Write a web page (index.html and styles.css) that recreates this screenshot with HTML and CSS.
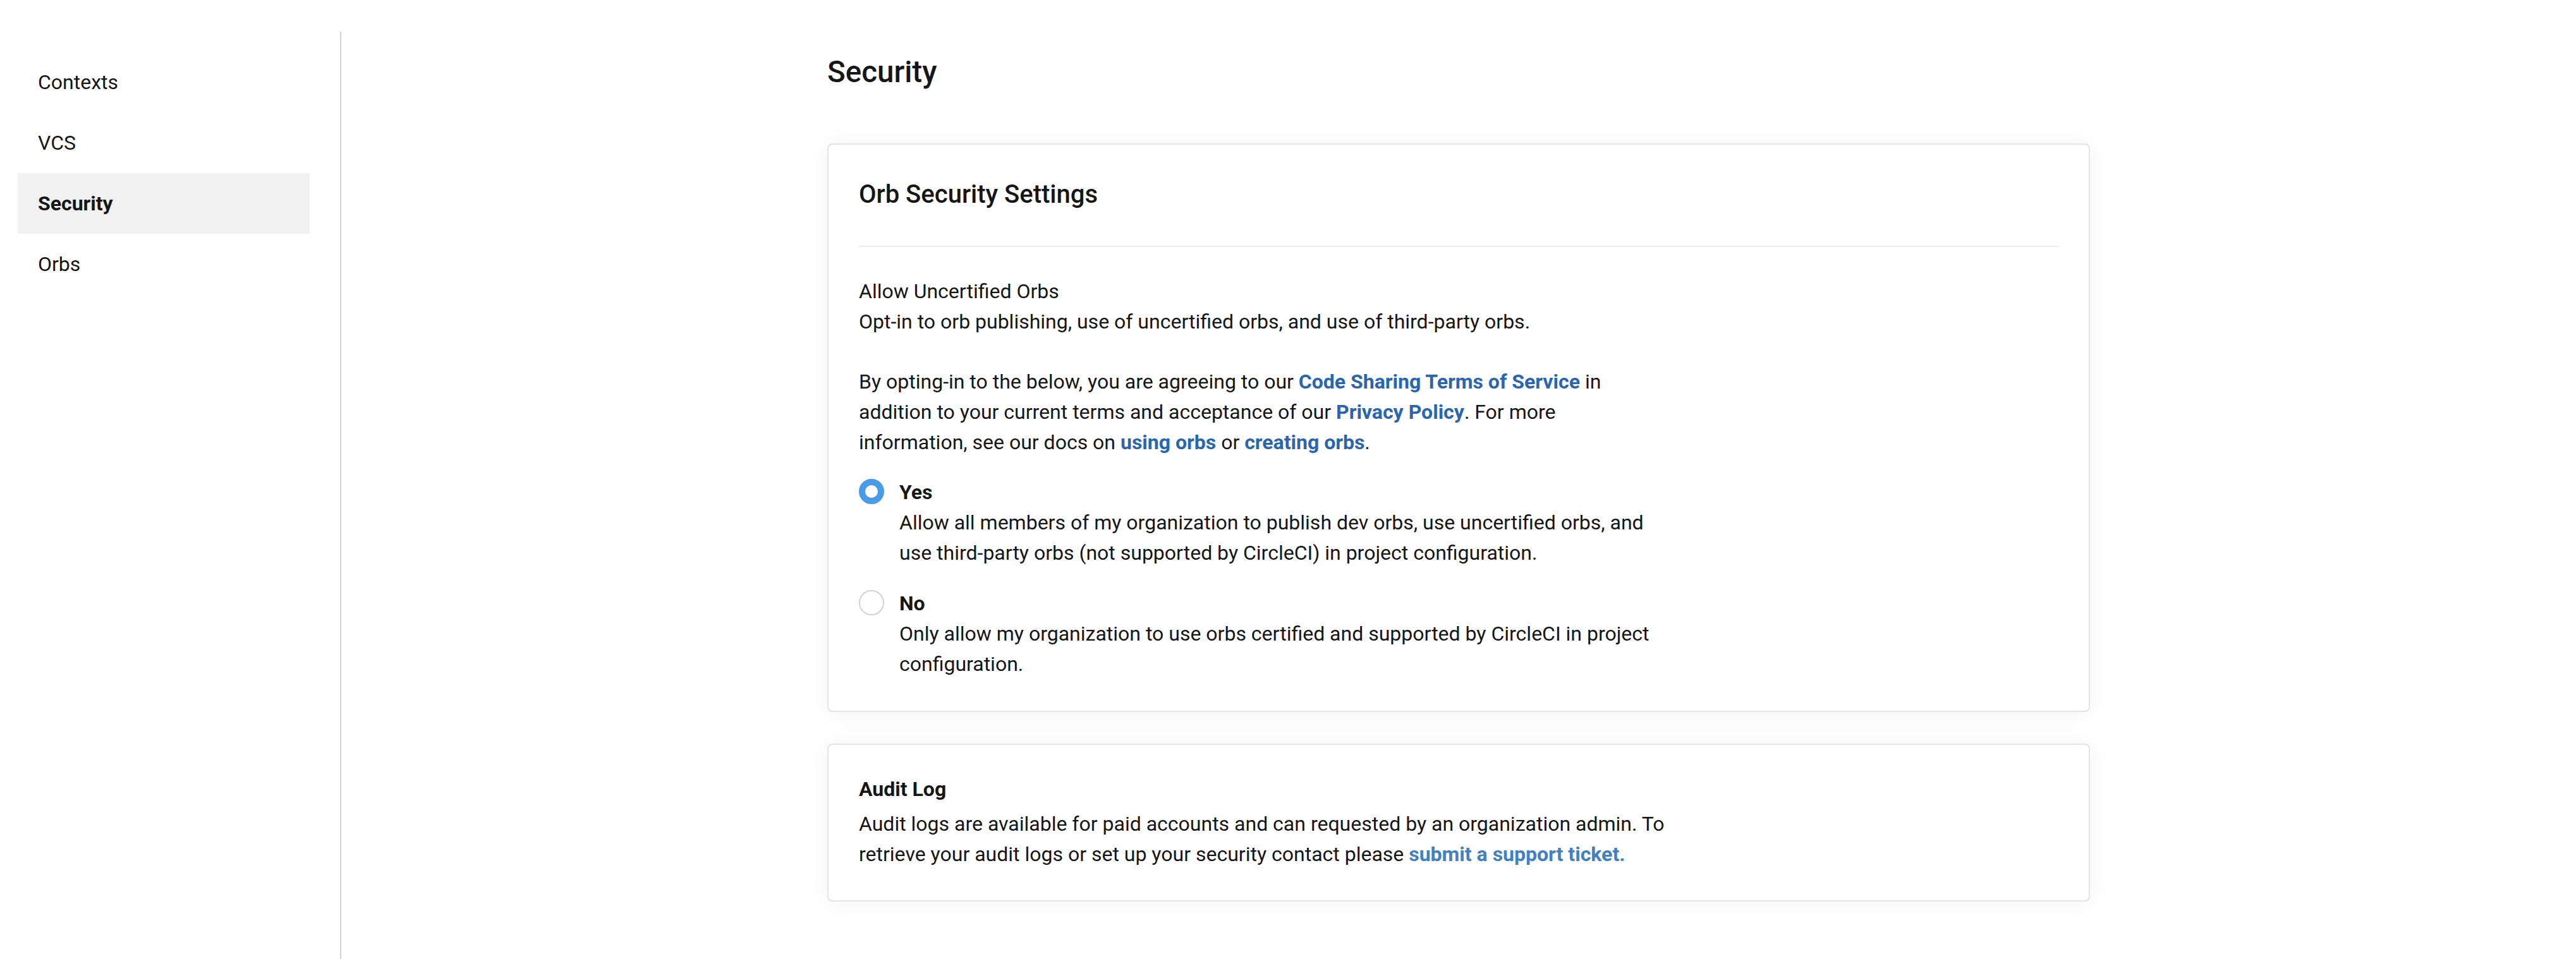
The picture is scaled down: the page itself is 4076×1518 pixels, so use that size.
FILE: index.html
```html
<!DOCTYPE html>
<html lang="en">
<head>
<meta charset="utf-8">
<title>Security</title>
<link rel="stylesheet" href="styles.css">
</head>
<body>
<div class="layout">
  <aside class="sidebar">
    <nav class="nav">
      <a class="nav-item">Contexts</a>
      <a class="nav-item">VCS</a>
      <a class="nav-item active">Security</a>
      <a class="nav-item">Orbs</a>
    </nav>
  </aside>
  <main class="main">
    <div class="content">
      <h1 class="page-title">Security</h1>

      <section class="card">
        <header class="card-header">
          <h2 class="card-title">Orb Security Settings</h2>
        </header>
        <div class="card-body">
          <div class="text-block">
            <p class="para">Allow Uncertified Orbs<br>Opt-in to orb publishing, use of uncertified orbs, and use of third-party orbs.</p>
            <p class="para">By opting-in to the below, you are agreeing to our <a class="link">Code Sharing Terms of Service</a> in addition to your current terms and acceptance of our <a class="link">Privacy Policy</a>. For more information, see our docs on <a class="link">using orbs</a> or <a class="link">creating orbs</a>.</p>
            <div class="radio-row">
              <span class="radio checked"></span>
              <div class="radio-text">
                <div class="radio-label">Yes</div>
                <div class="radio-desc">Allow all members of my organization to publish dev orbs, use uncertified orbs, and use third-party orbs (not supported by CircleCI) in project configuration.</div>
              </div>
            </div>
            <div class="radio-row second">
              <span class="radio"></span>
              <div class="radio-text">
                <div class="radio-label">No</div>
                <div class="radio-desc">Only allow my organization to use orbs certified and supported by CircleCI in project configuration.</div>
              </div>
            </div>
          </div>
        </div>
      </section>

      <section class="card audit">
        <div class="text-block">
          <h3 class="audit-title">Audit Log</h3>
          <p class="audit-text">Audit logs are available for paid accounts and can requested by an organization admin. To retrieve your audit logs or set up your security contact please <a class="link light">submit a support ticket.</a></p>
        </div>
      </section>
    </div>
  </main>
</div>
</body>
</html>
```

FILE: styles.css
```css
* { box-sizing: border-box; }

html, body {
  margin: 0;
  padding: 0;
  background: #ffffff;
}

body {
  font-family: Roboto, "Liberation Sans", Arial, sans-serif;
  color: #161616;
  font-size: 32px;
  line-height: 48px;
}

.layout {
  display: flex;
  min-height: 100vh;
}

.sidebar {
  width: 540px;
  flex: 0 0 540px;
  margin-top: 50px;
  padding: 32px 48px 0 28px;
  border-right: 2px solid #d4d4d4;
  min-height: calc(100vh - 50px);
}

.nav {
  display: flex;
  flex-direction: column;
}

.nav-item {
  display: block;
  height: 96px;
  line-height: 96px;
  padding-left: 32px;
  font-size: 32px;
  color: #161616;
}

.nav-item.active {
  background: #f1f1f1;
  font-weight: 700;
}

.main {
  flex: 1;
  display: flex;
  justify-content: center;
}

.content {
  width: 1998px;
  padding-top: 84px;
}

.page-title {
  margin: 0 0 83px;
  font-size: 47.5px;
  line-height: 60px;
  font-weight: 500;
}

.card {
  background: #fff;
  border: 2px solid #e4e4e4;
  border-radius: 8px;
  box-shadow: 0 2px 40px rgba(0, 0, 0, 0.05);
  padding: 0 48px 50px;
}

.card-header {
  padding: 55px 0 58px;
  border-bottom: 2px solid #ececec;
}

.card-title {
  margin: 0;
  font-size: 40px;
  line-height: 47px;
  font-weight: 500;
}

.card-body {
  padding-top: 46px;
}

.text-block {
  max-width: 1280px;
}

.para {
  margin: 0 0 47px;
}

.para + .para {
  margin-bottom: 0;
}

.link {
  color: #2a66ad;
  font-weight: 700;
  text-decoration: none;
}

.link.light {
  color: #4280c0;
}

.radio-row {
  display: flex;
  gap: 24px;
  margin-top: 31px;
}

.radio-row.second {
  margin-top: 32px;
}

.radio {
  flex: 0 0 40px;
  width: 40px;
  height: 40px;
  margin-top: 3px;
  border-radius: 50%;
  border: 2px solid #d3d3d3;
  background: #fff;
}

.radio.checked {
  border: 10px solid #4a9be8;
}

.radio-label {
  font-weight: 700;
}

.card.audit {
  margin-top: 50px;
  padding: 46px 48px 49px;
}

.audit-title {
  margin: 0 0 7px;
  font-size: 32px;
  line-height: 48px;
  font-weight: 700;
}

.audit-text {
  margin: 0;
}
```
